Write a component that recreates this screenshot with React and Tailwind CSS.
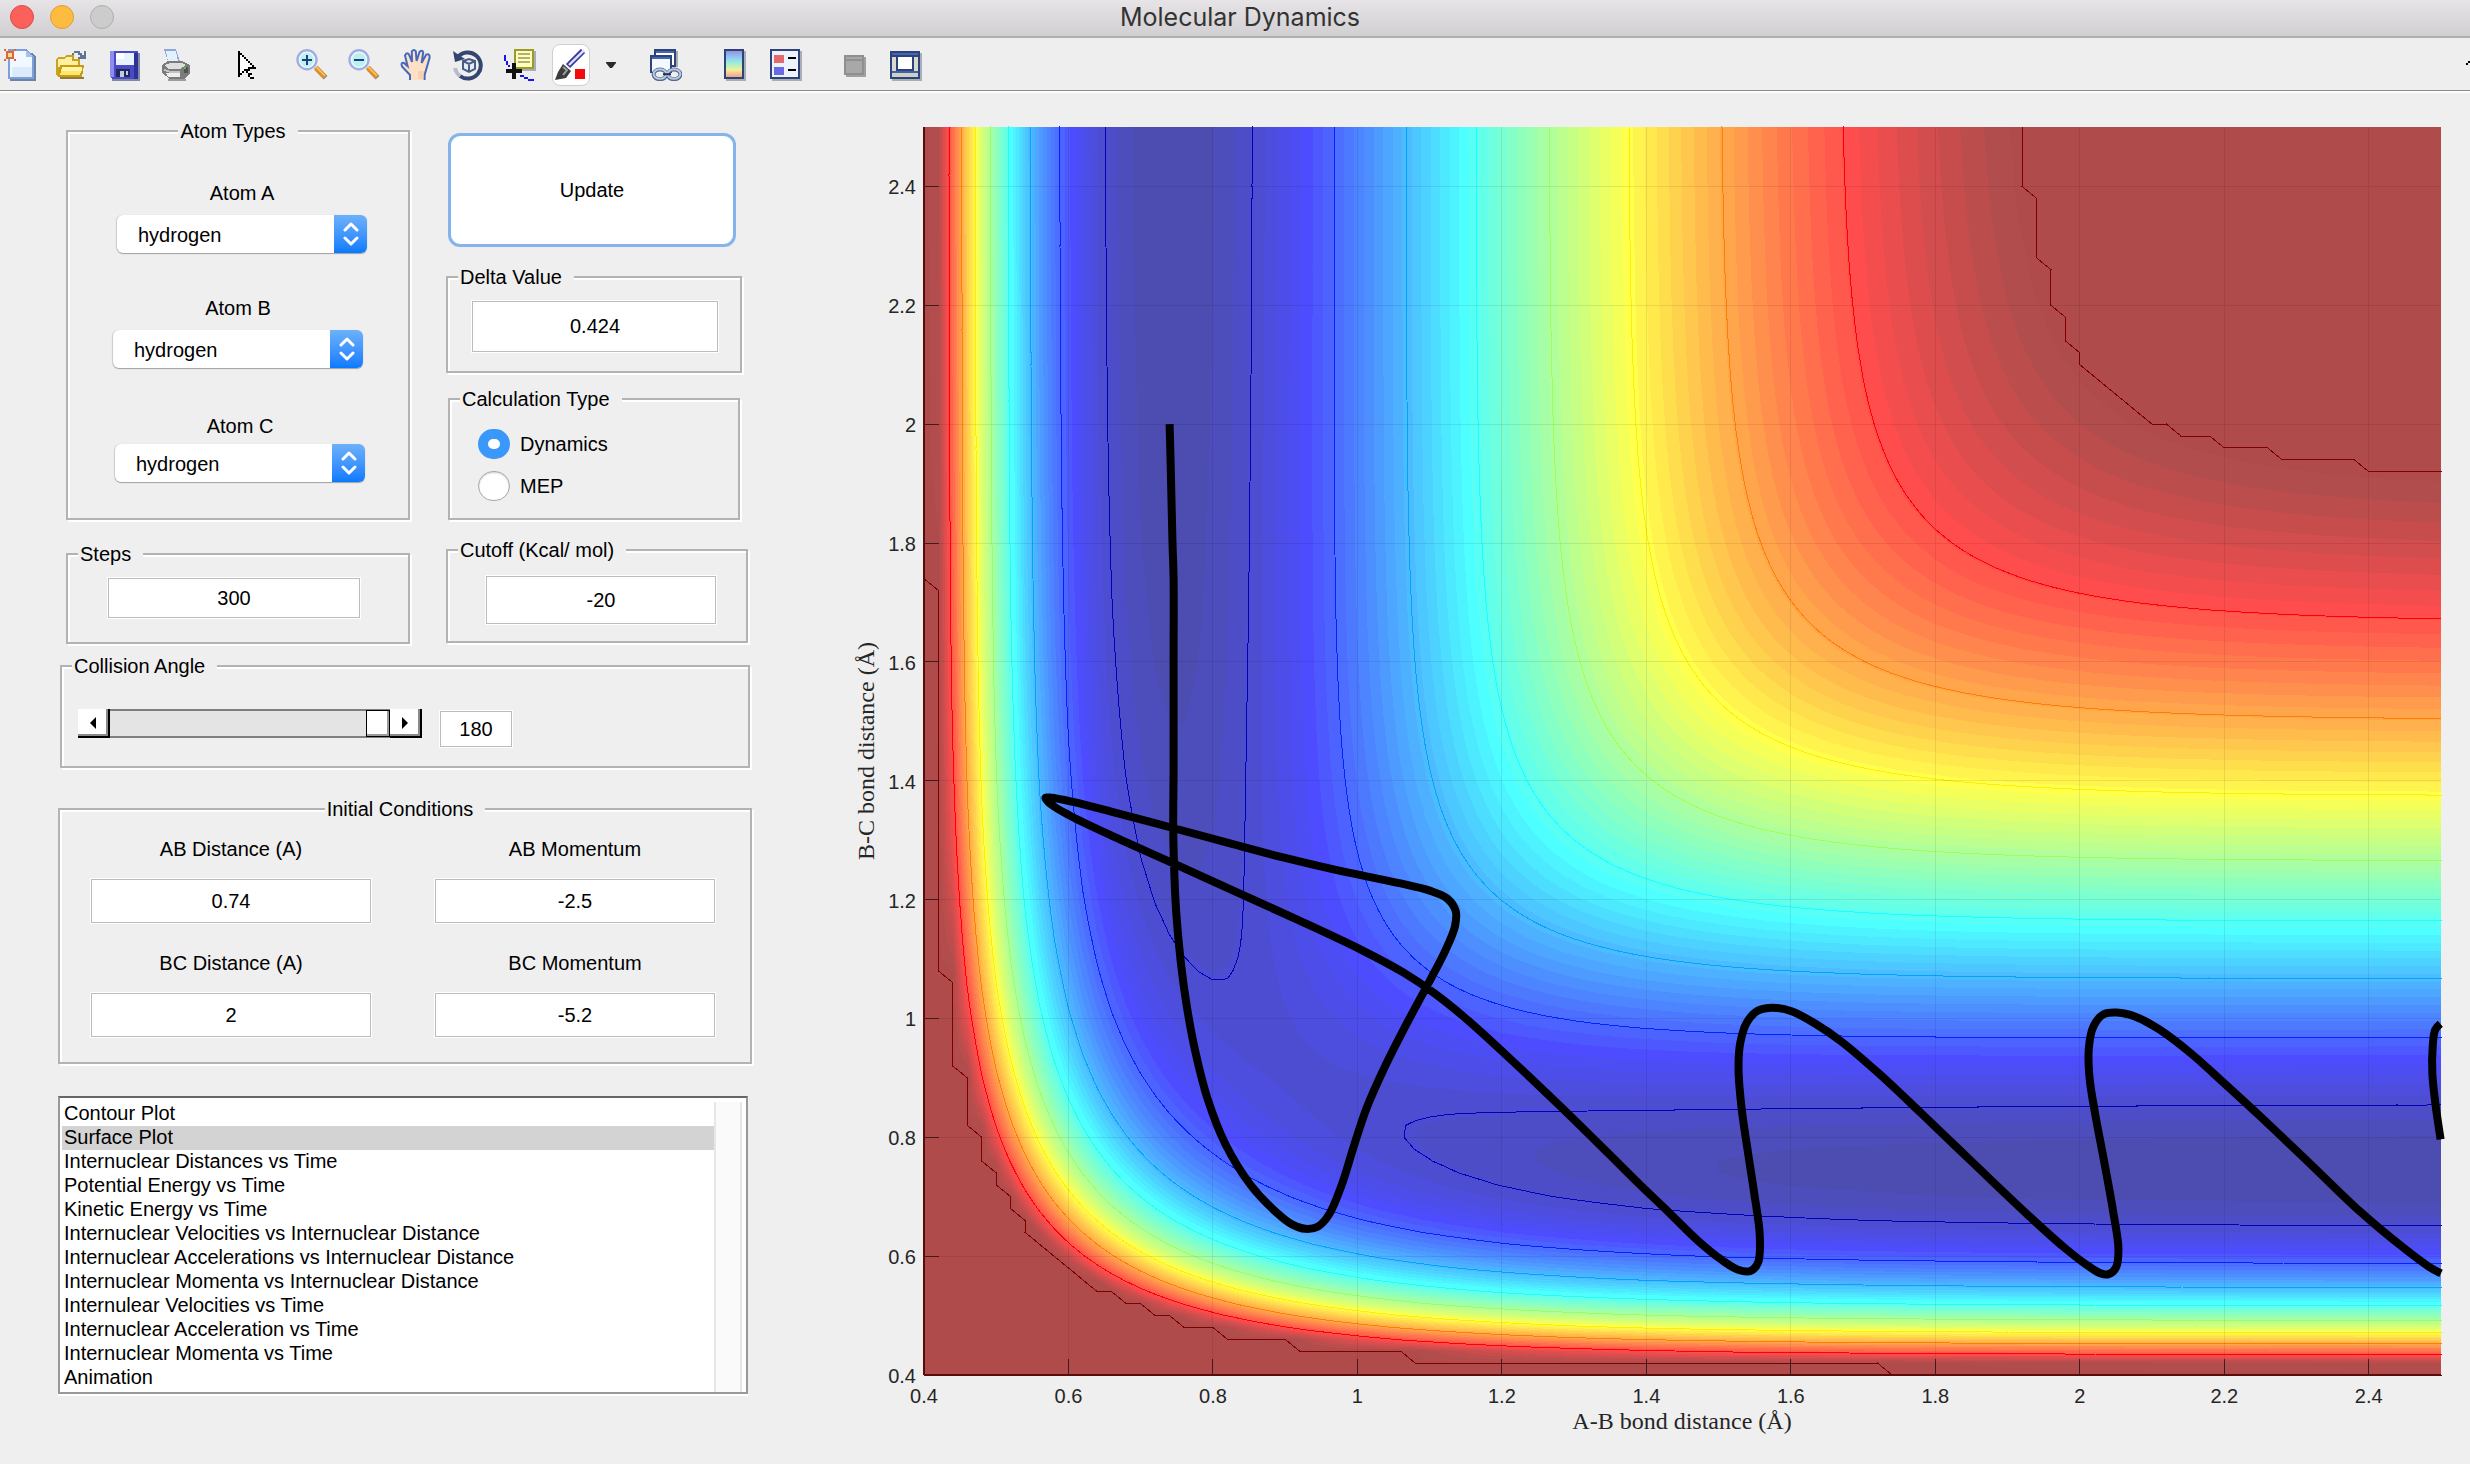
import React, { useState } from "react";

/* ---------- potential energy surface (LEPS, collinear H + H2) ---------- */

const DISSOCIATION = 109.46;
const BOND = 0.7414;
const SATO = 0.18;
const CUTOFF = -21.9;
const FLOOR = -109.4;
const MIN = 0.4;
const STEP = 0.02;
const COUNT = 106;
const PLOT_W = 1517;
const PLOT_H = 1248;

function pair(r) {
  const beta = r < BOND ? 1.975 : 1.942;
  const m = Math.exp(-beta * (r - BOND));
  const bound = DISSOCIATION * (m * m - 2 * m) * (1 + SATO);
  const free = 0.5 * DISSOCIATION * (m * m + 2 * m) * (1 - SATO);
  return [(bound + free) / 2, (bound - free) / 2];
}

function energy(ab, bc) {
  const [q1, j1] = pair(ab);
  const [q2, j2] = pair(bc);
  const [q3, j3] = pair(ab + bc);
  const root = Math.sqrt(0.5 * ((j1 - j2) ** 2 + (j2 - j3) ** 2 + (j1 - j3) ** 2));
  return Math.min(CUTOFF, (q1 + q2 + q3 - root) / (1 + SATO));
}

const toX = (v) => ((v - MIN) / 2.1) * PLOT_W;
const toY = (v) => PLOT_H - ((v - MIN) / 2.1) * PLOT_H;

const N = COUNT + 2;
const clampIndex = (i) => Math.min(COUNT - 1, Math.max(0, i - 1));
const px = Array.from({ length: N }, (_, i) => toX(MIN + clampIndex(i) * STEP));
const py = Array.from({ length: N }, (_, i) => toY(MIN + clampIndex(i) * STEP));
const grid = Array.from({ length: N }, (_, j) =>
  Array.from({ length: N }, (_, i) =>
    i === 0 || j === 0 || i === N - 1 || j === N - 1
      ? 1e7
      : energy(MIN + (i - 1) * STEP, MIN + (j - 1) * STEP)
  )
);

/* Marching squares: closed outlines of the area below a level. */
function trace(level) {
  const next = new Map();
  const points = new Map();
  const lines = [];
  const cross = (i, j, k, l) => {
    const a = grid[j][i];
    const b = grid[l][k];
    const t = (level - a) / (b - a);
    return [px[i] + t * (px[k] - px[i]), py[j] + t * (py[l] - py[j])];
  };
  for (let j = 0; j < N - 1; j++) {
    for (let i = 0; i < N - 1; i++) {
      const corners = [[i, j], [i + 1, j], [i + 1, j + 1], [i, j + 1]];
      const ids = [2 * (j * N + i), 2 * (j * N + i + 1) + 1, 2 * ((j + 1) * N + i), 2 * (j * N + i) + 1];
      const below = corners.map(([a, b]) => grid[b][a] < level);
      const starts = [];
      const ends = [];
      for (let e = 0; e < 4; e++) {
        const f = (e + 1) % 4;
        if (below[e] === below[f]) continue;
        const id = ids[e];
        if (!points.has(id)) points.set(id, cross(...corners[e], ...corners[f]));
        (below[e] ? starts : ends).push([e, id]);
      }
      starts.forEach(([e, id]) => {
        const target = ends.length === 1 ? ends[0] : ends.find(([f]) => f === (e + 3) % 4);
        next.set(id, target[1]);
        if (i > 0 && j > 0 && i < N - 2 && j < N - 2) lines.push([id, target[1]]);
      });
    }
  }
  const text = (id) => {
    const p = points.get(id);
    return p[0].toFixed(1) + " " + p[1].toFixed(1);
  };
  const stroke = lines.map(([a, b]) => "M" + text(a) + "L" + text(b)).join("");
  let fill = "";
  while (next.size) {
    const first = next.keys().next().value;
    let at = first;
    const ring = [];
    while (next.has(at)) {
      ring.push(text(at));
      const to = next.get(at);
      next.delete(at);
      at = to;
    }
    fill += "M" + ring.join("L") + "Z";
  }
  return { fill, stroke };
}

function jet(k, alpha) {
  const ramp = (offset) => {
    const t = (k + 1 - offset) / 16;
    return Math.max(0, Math.min(1, t < 1 ? t : t < 2 ? 1 : 3 - t));
  };
  const mix = (v) => Math.round(255 * (v * alpha + (1 - alpha)));
  return `rgb(${mix(ramp(24))},${mix(ramp(8))},${mix(ramp(-8))})`;
}

const bands = [];
for (let k = 62; k >= 0; k--) {
  const level = FLOOR + ((CUTOFF + 1 - FLOOR) * (k + 1)) / 64;
  if (level < CUTOFF) bands.push({ color: jet(k, 0.7), path: trace(level).fill });
}

const CONTOURS = [
  [-105.1, "#0000b4"],
  [-95.5, "#0024ff"],
  [-85.3, "#00a4ff"],
  [-75.1, "#1cffff"],
  [-64.8, "#9cff60"],
  [-54.6, "#ffee00"],
  [-44.2, "#ff8000"],
  [-33.2, "#ff0000"],
  [CUTOFF - 0.00001, "#800000"],
].map(([level, color]) => ({ color, path: trace(level).stroke }));

/* ---------- trajectory ---------- */

const TRAJECTORY = [
  [0.74, 2], [0.7415, 1.93], [0.744, 1.8], [0.7455, 1.74], [0.7455, 1.6], [0.7455, 1.418], [0.745, 1.322], [0.746, 1.263],
  [0.749, 1.181], [0.755, 1.1], [0.764, 1.019], [0.776, 0.942], [0.793, 0.863], [0.817, 0.789], [0.852, 0.72],
  [0.888, 0.6735], [0.91, 0.653], [0.928, 0.646], [0.945, 0.6496], [0.96, 0.6686], [0.978, 0.719], [0.995, 0.785],
  [1.013, 0.85], [1.038, 0.9187], [1.069, 0.993], [1.1, 1.063], [1.122, 1.115], [1.135, 1.155], [1.136, 1.181],
  [1.124, 1.202], [1.1, 1.215], [1.056, 1.228], [0.97, 1.25], [0.897, 1.271], [0.825, 1.294], [0.746, 1.32],
  [0.659, 1.348], [0.608, 1.364], [0.576, 1.3715], [0.568, 1.3708], [0.576, 1.36], [0.601, 1.342], [0.659, 1.308],
  [0.746, 1.2605], [0.832, 1.213], [0.919, 1.165], [1.006, 1.115], [1.064, 1.077], [1.107, 1.042], [1.15, 1],
  [1.216, 0.927], [1.281, 0.852], [1.346, 0.7745], [1.392, 0.719], [1.4286, 0.6767], [1.4725, 0.6247], [1.505, 0.593],
  [1.527, 0.577], [1.544, 0.575], [1.5546, 0.589], [1.557, 0.634], [1.549, 0.708], [1.5407, 0.774], [1.5315, 0.852],
  [1.5275, 0.918], [1.53, 0.959], [1.539, 0.993], [1.554, 1.013], [1.575, 1.018], [1.601, 1.012], [1.634, 0.991],
  [1.67, 0.961], [1.7216, 0.9076], [1.78, 0.841], [1.853, 0.756], [1.9267, 0.671], [1.978, 0.615], [2.011, 0.584],
  [2.029, 0.571], [2.04, 0.5698], [2.05, 0.5805], [2.0535, 0.6116], [2.046, 0.676], [2.0325, 0.767], [2.021, 0.841],
  [2.0135, 0.9], [2.0125, 0.95], [2.019, 0.987], [2.033, 1.007], [2.051, 1.01], [2.077, 1.003], [2.11, 0.9815],
  [2.154, 0.941], [2.198, 0.893], [2.249, 0.836], [2.315, 0.76], [2.388, 0.675], [2.447, 0.615], [2.4835, 0.582], [2.5, 0.571],
];
const RETURN = [[2.499, 0.991], [2.492, 0.981], [2.4885, 0.952], [2.488, 0.9076], [2.4923, 0.856], [2.4995, 0.7966]];

/* Centripetal Catmull-Rom spline as cubic Béziers. */
function spline(data) {
  const p = data.map(([x, y]) => [toX(x), toY(y)]);
  const root = (a, b) => Math.sqrt(Math.hypot(a[0] - b[0], a[1] - b[1])) || 1;
  let d = `M${p[0][0]} ${p[0][1]}`;
  for (let i = 0; i < p.length - 1; i++) {
    const a = p[i - 1] || p[i];
    const b = p[i];
    const c = p[i + 1];
    const e = p[i + 2] || c;
    const s = root(a, b);
    const t = root(b, c);
    const u = root(c, e);
    const one = [0, 1].map((k) =>
      i === 0 ? b[k] : (s * s * c[k] - t * t * a[k] + (2 * s * s + 3 * s * t + t * t) * b[k]) / (3 * s * (s + t))
    );
    const two = [0, 1].map((k) =>
      i === p.length - 2 ? c[k] : (u * u * b[k] - t * t * e[k] + (2 * u * u + 3 * u * t + t * t) * c[k]) / (3 * u * (u + t))
    );
    d += `C${one[0]} ${one[1]} ${two[0]} ${two[1]} ${c[0]} ${c[1]}`;
  }
  return d;
}

const TICKS = [0.4, 0.6, 0.8, 1, 1.2, 1.4, 1.6, 1.8, 2, 2.2, 2.4];

function EnergyPlot() {
  return (
    <svg viewBox="0 0 1620 1371" className="block h-auto w-full" role="img" aria-label="Potential energy contour plot">
      <g transform="translate(74 34)">
        <rect width={PLOT_W} height={PLOT_H} fill="#af4b4b" />
        <g shapeRendering="crispEdges">
          {bands.map((b, i) => (
            <path key={i} d={b.path} fill={b.color} fillRule="evenodd" />
          ))}
          {CONTOURS.map((c, i) => (
            <path key={i} d={c.path} fill="none" stroke={c.color} strokeWidth="1" strokeLinecap="square" />
          ))}
          {TICKS.map((t) => (
            <g key={t} stroke="#000">
              {t > 0.4 && (
                <>
                  <path d={`M${toX(t)} 0V${PLOT_H}M0 ${toY(t)}H${PLOT_W}`} opacity="0.08" />
                  <path d={`M${toX(t)} ${PLOT_H}v-16M0 ${toY(t)}h15`} opacity="0.6" />
                </>
              )}
            </g>
          ))}
          <path d={`M0 0V${PLOT_H}`} stroke="#5a0c0c" strokeWidth="2" fill="none" />
          <path d={`M0 ${PLOT_H}H${PLOT_W}`} stroke="#5a0c0c" strokeWidth="2" />
        </g>
        <path d={spline(TRAJECTORY)} fill="none" stroke="#000" strokeWidth="8" strokeLinejoin="round" />
        <path d={spline(RETURN)} fill="none" stroke="#000" strokeWidth="8" strokeLinejoin="round" />
      </g>
      <g fill="#262626" fontSize="20" className="font-['Liberation_Sans',sans-serif]">
        {TICKS.map((t) => (
          <React.Fragment key={t}>
            <text x={74 + toX(t)} y="1310" textAnchor="middle">{t}</text>
            <text x="66" y={34 + toY(t) + 8} textAnchor="end">{t}</text>
          </React.Fragment>
        ))}
      </g>
      <g fill="#262626" fontSize="24" textAnchor="middle" className="font-['Liberation_Serif',serif]">
        <text x="832" y="1336">A-B bond distance (Å)</text>
        <text transform="translate(24 658) rotate(-90)">B-C bond distance (Å)</text>
      </g>
    </svg>
  );
}

/* ---------- toolbar ---------- */

function Icon({ children, wide }) {
  return (
    <svg viewBox={wide || "0 0 16 16"} className="block size-8" shapeRendering="crispEdges" aria-hidden="true">
      {children}
    </svg>
  );
}

function Magnifier({ plus }) {
  return (
    <Icon>
      <g shapeRendering="auto">
        <path d="M10.2 9.6l4.6 4.8" stroke="#8d8d94" strokeWidth="2.6" />
        <path d="M9.8 9.2l4.6 4.8" stroke="#e08f22" strokeWidth="2.4" />
        <path d="M10 8.8l4.4 4.6" stroke="#ffc36a" strokeWidth="0.8" />
        <circle cx="5.5" cy="5.4" r="4.7" fill="#bdeef0" stroke="#a3aee0" strokeWidth="1.3" />
        <circle cx="5.5" cy="5.4" r="3.8" fill="none" stroke="#e8fbff" strokeWidth="0.7" />
      </g>
      <path d="M3 5h5v1H3z" fill="#1c3f80" />
      {plus && <path d="M5 3h1v5H5z" fill="#1c3f80" />}
    </Icon>
  );
}

const TOOLS = [
  {
    label: "New figure", gap: "ml-1",
    art: (
      <Icon>
        <path d="M3 2h11l2 2v12H3z" fill="#6d83a3" />
        <path d="M2 0h9l4 4v11H2z" fill="#7ba0dc" />
        <path d="M3 1h8v3h3v10H3z" fill="#f2f8ff" />
        <path d="M4 9h10v5H4z" fill="#dcebfb" />
        <path d="M11 1h1v1h1v1h1v1h-3z" fill="#a9c2ea" />
        <path d="M1 1h4v4H1zM0 0h1v1H0zM5 0h1v1H5zM0 5h1v1H0zM5 5h1v1H5z" fill="#e0653a" />
        <path d="M2 2h2v2H2z" fill="#ffe08a" />
      </Icon>
    ),
  },
  {
    label: "Open", gap: "ml-5",
    art: (
      <Icon>
        <path d="M0 5l1-1h3l1-1h4v2h3v9H1l-1-1z" fill="#caa21c" />
        <path d="M1 5h3l1-1h3v2h3v3H1z" fill="#fff0a0" />
        <path d="M2 8h12l-1 6H1z" fill="#c99a14" />
        <path d="M3 9h10l-1 4H2z" fill="#ffe668" />
        <path d="M3 9h10v2H3z" fill="#fff6a8" />
        <path d="M8 2h1V1h3v1h1v1h1V1h1v4h-4V4h1V3h-1V2H9v1H8z" fill="#5c7693" />
        <path d="M2 14h12v1H2z" fill="#8f7a3c" />
      </Icon>
    ),
  },
  {
    label: "Save", gap: "ml-5",
    art: (
      <Icon>
        <path d="M2 2h14v14H2z" fill="#7f8aa6" />
        <path d="M1 1h14v14H2l-1-1z" fill="#4a4ac4" />
        <path d="M1 1h2v13H1z" fill="#8d8df0" />
        <path d="M13 2h2v13h-2z" fill="#30309a" />
        <path d="M4 2h9v6H4z" fill="#e9f3ff" />
        <path d="M4 2h4v3H4z" fill="#fff" />
        <path d="M4 10h7v4H4z" fill="#26265e" />
        <path d="M6 11h2v3H6zM9 11h1v2H9z" fill="#b9d0d8" />
      </Icon>
    ),
  },
  {
    label: "Print", gap: "ml-5",
    art: (
      <Icon>
        <path d="M2 0h6l2 6H4z" fill="#8fa9d4" />
        <path d="M3 1h5l1 5H4z" fill="#e2f0ff" />
        <path d="M1 8l3-2h7l4 2v4l-3 3H5l-4-3z" fill="#7b7b7b" />
        <path d="M2 8l3-1h6l2 1-3 2H4z" fill="#dedede" />
        <path d="M2 10l3 1h5v1H5l-3-1z" fill="#c4c4c4" />
        <path d="M3 12h7v2H4z" fill="#eee" />
        <path d="M12 9h2v3h-2z" fill="#545454" />
        <path d="M12 9h1v1h-1z" fill="#5fc03e" />
        <path d="M4 15h9v1H4z" fill="#9c9c9c" />
      </Icon>
    ),
  },
  {
    label: "Edit plot", gap: "ml-11",
    art: (
      <Icon>
        <path d="M1 1h1v1h1v1h1v1h1v1h1v1h1v1h1v1h1v1h1v1H7v2h1v2h1v1H7v-1H6v-2H5v-1H4v1H3v1H2v1H1z" fill="#000" />
        <path d="M2 3h1v1h1v1h1v1h1v1h1v1h1v1H6v2h1v2h1v1H7v-2H6v-2H4v1H3v1H2z" fill="#fff" />
      </Icon>
    ),
  },
  { label: "Zoom in", gap: "ml-7", art: <Magnifier plus /> },
  { label: "Zoom out", gap: "ml-5", art: <Magnifier /> },
  {
    label: "Pan", gap: "ml-5",
    art: (
      <Icon>
        <path
          shapeRendering="auto"
          d="M5 15.5V13L1 8.7Q.2 6.6 2 7l1.8 1.6L2.5 3.2Q3.6 1.2 4.6 3L6 6.5 5.9 1.2Q7-.2 7.9 1.2L8.3 6 9.8 1.4Q11.2.2 11.6 1.8L10.8 7l2.3-4.2Q15 2.2 14.8 4.4L12.3 13v2.5"
          fill="#fde0c6" stroke="#4668bd" strokeWidth="1"
        />
        <path d="M9 11h3v4H9z" fill="#eec09c" opacity=".5" />
      </Icon>
    ),
  },
  {
    label: "Rotate 3D", gap: "ml-5",
    art: (
      <Icon wide="0 0 32 32">
        <g shapeRendering="auto" fill="none">
          <path d="M6 8A13 13 0 1 1 8 27" stroke="#34466f" strokeWidth="4" />
          <path d="M8 27A13 13 0 0 1 3 19" stroke="#b7bcc8" strokeWidth="4" />
          <path d="M1 2l2 11 10-3z" fill="#34466f" />
          <path d="M11 12l6-2 6 2v8l-6 3-6-3zM11 12l6 3 6-3M17 15v8" stroke="#4a5b85" strokeWidth="2" fill="#e6ecf4" />
        </g>
      </Icon>
    ),
  },
  {
    label: "Data cursor", gap: "ml-5",
    art: (
      <Icon>
        <path d="M0 3h1v3H0zM1 6h1v2H1zM2 8h1v1H2zM8 13h2v1H8zM10 14h2v1h-2zM12 15h3v1h-3z" fill="#1414f0" />
        <path d="M6 1h10v10H6z" fill="#a9adb8" />
        <path d="M5 0h10v10H5z" fill="#9a9a2e" />
        <path d="M6 1h8v8H6z" fill="#ffffb8" />
        <path d="M7 2h6v1H7zM7 4h6v1H7zM7 6h6v1H7z" fill="#b0b078" />
        <path d="M4 7h2v8H4zM1 10h8v2H1z" fill="#111" />
      </Icon>
    ),
  },
];

function Toolbar() {
  return (
    <div role="toolbar" aria-label="Figure tools" className="flex h-[55px] items-center border-b-2 border-white bg-[#eeeeee] shadow-[inset_0_-1px_0_#8c8c8c]">
      {TOOLS.map((t) => (
        <button key={t.label} type="button" aria-label={t.label} className={t.gap}>
          {t.art}
        </button>
      ))}
      <button type="button" aria-label="Brush" className="ml-4 flex h-[42px] w-[38px] items-center justify-center rounded-lg border border-[#cfcfcf] bg-white">
        <Icon>
          <g shapeRendering="auto">
            <path d="M6.5 8.5L14 1" stroke="#3b3b9c" strokeWidth="3" />
            <path d="M7 8L14.6.6" stroke="#dfe2ff" strokeWidth="1.2" />
            <path d="M4 7.5L8 11l-2.5 3.5L0 15.5l1.5-4z" fill="#3c3c3c" />
            <path d="M4 9l2 1.6-2 2.4" fill="none" stroke="#9a9a9a" />
          </g>
          <path d="M10 10h5v5h-5z" fill="#f40b0b" />
        </Icon>
      </button>
      <button type="button" aria-label="Brush options" className="ml-4">
        <svg viewBox="0 0 10 6" className="block h-1.5 w-2.5" aria-hidden="true"><path d="M0 0h10v1L6 6H4L0 1z" fill="#2b2b2b" /></svg>
      </button>
      <button type="button" aria-label="Link plot" className="ml-[34px]">
        <Icon>
          <path d="M5 1h9v8H5z" fill="#a6abb5" />
          <path d="M2 0h11v9H2z" fill="#2c4479" />
          <path d="M3 2h9v6H3z" fill="#fff" /><path d="M3 1h9v1H3z" fill="#4765b4" />
          <path d="M0 3h11v9H0z" fill="#2c4479" />
          <path d="M1 5h9v7H1z" fill="#f4f8ff" /><path d="M1 4h9v1H1z" fill="#4765b4" />
          <g shapeRendering="auto" fill="none">
            <ellipse cx="5" cy="12.7" rx="3.2" ry="2.4" stroke="#54678c" strokeWidth="2" />
            <ellipse cx="12" cy="12.7" rx="3.2" ry="2.4" stroke="#54678c" strokeWidth="2" />
            <ellipse cx="5" cy="12.5" rx="3.2" ry="2.4" stroke="#b9cbe4" strokeWidth="1" />
            <ellipse cx="12" cy="12.5" rx="3.2" ry="2.4" stroke="#b9cbe4" strokeWidth="1" />
            <path d="M6.5 12.6h4" stroke="#1d2f52" strokeWidth="1" />
          </g>
        </Icon>
      </button>
      <button type="button" aria-label="Insert colorbar" className="ml-9">
        <Icon>
          <defs>
            <linearGradient id="bar" x1="0" y1="0" x2="0" y2="1">
              <stop offset="0" stopColor="#9a8fe6" /><stop offset=".3" stopColor="#8ed6f4" /><stop offset=".5" stopColor="#a4f0cc" />
              <stop offset=".72" stopColor="#f2ef9a" /><stop offset="1" stopColor="#f4a08c" />
            </linearGradient>
          </defs>
          <path d="M4 1h10v15H4z" fill="#a9adb5" />
          <path d="M3 0h10v15H3z" fill="#2c4479" />
          <path d="M4 1h8v13H4z" fill="url(#bar)" />
        </Icon>
      </button>
      <button type="button" aria-label="Insert legend" className="ml-5">
        <Icon>
          <path d="M1 1h15v15H1z" fill="#a9adb5" />
          <path d="M0 0h15v15H0z" fill="#2c4479" />
          <path d="M1 1h13v13H1z" fill="#edf3fc" />
          <path d="M2 3h5v4H2z" fill="#e66a6a" />
          <path d="M2 9h5v4H2z" fill="#6a6ae6" />
          <path d="M9 4h4v1H9zM9 10h4v1H9z" fill="#000" />
        </Icon>
      </button>
      <button type="button" aria-label="Hide plot tools" disabled className="ml-10">
        <Icon>
          <path d="M2 4h10v10H2z" fill="#a0a0a0" />
          <path d="M1 3h10v10H1z" fill="#8f8f8f" />
          <path d="M2 4h8v1H2zM2 6h8v6H2z" fill="#a8a8a8" />
        </Icon>
      </button>
      <button type="button" aria-label="Show plot tools" className="ml-4">
        <Icon>
          <path d="M1 2h15v14H1z" fill="#a9adb5" />
          <path d="M0 1h15v14H0z" fill="#2c4479" />
          <path d="M1 2h13v1H1z" fill="#4765b4" />
          <path d="M1 4h13v7H1z" fill="#d9d9d2" />
          <path d="M3 4h9v7H3z" fill="#2c4479" />
          <path d="M4 4h7v6H4z" fill="#fff" />
          <path d="M1 12h13v2H1z" fill="#cfcfc6" />
          <path d="M1 11h13v1H1z" fill="#3f62a8" />
        </Icon>
      </button>
      <svg viewBox="0 0 4 4" className="-mt-1 ml-auto size-1" aria-hidden="true"><path d="M0 2h2V0h2v2H2v2H0z" /></svg>
    </div>
  );
}

/* ---------- controls ---------- */

function Group({ title, className, centered, children }) {
  return (
    <fieldset className={`min-w-0 border-2 border-[#b3b3b3] p-0 shadow-[inset_2px_2px_0_#fff,2px_2px_0_#fff] ${className}`}>
      <legend className={`bg-[#efefef] pr-3 pl-0.5 leading-7 ${centered ? "mx-auto" : "ml-2.5"}`}>{title}</legend>
      {children}
    </fieldset>
  );
}

function Field({ label, value, className, id }) {
  return (
    <input
      id={id}
      aria-label={label}
      defaultValue={value}
      className={`block border border-[#bcbcbc] bg-white p-0 text-center outline-1 outline-white ${className}`}
    />
  );
}

function AtomSelect({ name, className }) {
  const id = "atom-" + name;
  return (
    <div className={`flex flex-col items-center ${className}`}>
      <label htmlFor={id} className="leading-7">Atom {name}</label>
      <div className="relative w-[250px]">
        <select id={id} className="block h-[38px] w-full appearance-none rounded-md bg-white pt-0.5 pr-9 pl-[21px] shadow-[0_1px_1px_#a0a0a0,-1px_0_1px_#d0d0d0]">
          <option>hydrogen</option>
        </select>
        <span className="pointer-events-none absolute top-0 right-0 flex h-[38px] w-[33px] items-center justify-center rounded-r-md bg-linear-to-b from-[#6cb1fa] to-[#067aff]">
          <svg viewBox="0 0 16 26" className="h-[26px] w-4" fill="none" stroke="#fff" strokeWidth="3" strokeLinecap="round" strokeLinejoin="round" aria-hidden="true">
            <path d="M2 9l6-6 6 6M2 17l6 6 6-6" />
          </svg>
        </span>
      </div>
    </div>
  );
}

function Radio({ label, checked, onChange }) {
  return (
    <label className="mb-3 flex items-center gap-2.5 leading-[30px]">
      <input
        type="radio"
        name="calculation"
        checked={checked}
        onChange={onChange}
        className="h-[30px] w-8 appearance-none rounded-full border border-[#a8a8a8] bg-white shadow-[inset_0_1px_2px_#ccc] checked:border-[10px] checked:border-[#3a97fb] checked:shadow-none"
      />
      {label}
    </label>
  );
}

function Condition({ id, label, value }) {
  return (
    <div className="flex flex-col items-center">
      <label htmlFor={id} className="leading-7">{label}</label>
      <Field id={id} label={label} value={value} className="mt-4 h-[44px] w-[280px]" />
    </div>
  );
}

const PLOTS = [
  "Contour Plot",
  "Surface Plot",
  "Internuclear Distances vs Time",
  "Potential Energy vs Time",
  "Kinetic Energy vs Time",
  "Internuclear Velocities vs Internuclear Distance",
  "Internuclear Accelerations vs Internuclear Distance",
  "Internuclear Momenta vs Internuclear Distance",
  "Internulear Velocities vs Time",
  "Internuclear Acceleration vs Time",
  "Internuclear Momenta vs Time",
  "Animation",
];

const STEP_BUTTON = "flex h-[29px] w-8 items-center justify-center border-r-2 border-b-2 border-black bg-white shadow-[inset_-2px_-2px_0_#8a8a8a]";

function Controls() {
  const [mode, setMode] = useState("Dynamics");
  const [angle, setAngle] = useState(180);
  const [plot, setPlot] = useState("Surface Plot");
  return (
    <aside className="w-[850px] shrink-0 pt-6 pl-[58px]">
      <div className="flex gap-9 pl-2">
        <div className="w-[344px]">
          <Group title="Atom Types" centered className="h-[403px]">
            <AtomSelect name="A" className="mt-[34px] gap-2 pl-2" />
            <AtomSelect name="B" className="mt-[41px] gap-2" />
            <AtomSelect name="C" className="mt-11 gap-1 pl-1" />
          </Group>
          <Group title="Steps" className="mt-5 h-[104px]">
            <Field label="Steps" value="300" className="mt-2.5 ml-10 h-10 w-[252px]" />
          </Group>
        </div>
        <div className="w-[302px]">
          <button type="button" className="mt-4 ml-0.5 block h-[114px] w-[288px] rounded-xl border-3 border-[#83b5ea] bg-white">Update</button>
          <Group title="Delta Value" className="mt-4 h-[110px] w-[296px]">
            <Field label="Delta Value" value="0.424" className="mt-2.5 ml-6 h-[51px] w-[246px]" />
          </Group>
          <Group title="Calculation Type" className="mt-3 ml-0.5 h-[135px] w-[292px]">
            <div className="mt-4 ml-7">
              <Radio label="Dynamics" checked={mode === "Dynamics"} onChange={() => setMode("Dynamics")} />
              <Radio label="MEP" checked={mode === "MEP"} onChange={() => setMode("MEP")} />
            </div>
          </Group>
          <Group title="Cutoff (Kcal/ mol)" className="mt-4 h-[107px]">
            <Field label="Cutoff" value="-20" className="mt-3 ml-[38px] h-12 w-[230px]" />
          </Group>
        </div>
      </div>
      <Group title="Collision Angle" className="mt-2 ml-0.5 h-[116px] w-[690px]">
        <div className="mt-[29px] ml-4 flex">
          <button type="button" aria-label="Decrease angle" className={STEP_BUTTON}>
            <svg viewBox="0 0 6 12" className="h-3 w-1.5" aria-hidden="true"><path d="M6 0v12L0 6z" /></svg>
          </button>
          <input
            type="range" aria-label="Collision Angle" min="0" max="180" value={angle}
            onChange={(e) => setAngle(Number(e.target.value))}
            className="h-[29px] w-[280px] appearance-none border-y-2 border-[#7f7f7f] bg-[#e4e4e4] [&::-webkit-slider-thumb]:h-[27px] [&::-webkit-slider-thumb]:w-6 [&::-webkit-slider-thumb]:appearance-none [&::-webkit-slider-thumb]:border [&::-webkit-slider-thumb]:border-black [&::-webkit-slider-thumb]:bg-white [&::-webkit-slider-thumb]:shadow-[inset_-2px_-2px_0_#9a9a9a]"
          />
          <button type="button" aria-label="Increase angle" className={STEP_BUTTON}>
            <svg viewBox="0 0 6 12" className="h-3 w-1.5" aria-hidden="true"><path d="M0 0v12l6-6z" /></svg>
          </button>
          <input aria-label="Angle in degrees" value={angle} onChange={(e) => setAngle(Number(e.target.value) || 0)} className="mt-0.5 ml-[18px] h-9 w-[72px] border border-[#bcbcbc] bg-white text-center outline-1 outline-white" />
        </div>
      </Group>
      <Group title="Initial Conditions" centered className="mt-[27px] h-[269px] w-[694px]">
        <div className="mt-3 flex gap-16 pl-[31px]">
          <div className="flex flex-col gap-[26px]">
            <Condition id="ab-distance" label="AB Distance (A)" value="0.74" />
            <Condition id="bc-distance" label="BC Distance (A)" value="2" />
          </div>
          <div className="flex flex-col gap-[26px]">
            <Condition id="ab-momentum" label="AB Momentum" value="-2.5" />
            <Condition id="bc-momentum" label="BC Momentum" value="-5.2" />
          </div>
        </div>
      </Group>
      <div className="mt-8 flex w-[690px] border-2 border-[#999] border-t-[#666] bg-white shadow-[0_2px_0_#fff]">
        <select
          size={12} aria-label="Plot" value={plot} onChange={(e) => setPlot(e.target.value)}
          className="h-[294px] grow overflow-hidden bg-white p-0 pt-1 pl-0.5 outline-none"
        >
          {PLOTS.map((p) => (
            <option key={p} className="h-6 p-0 pl-0.5 leading-6 text-black checked:bg-[linear-gradient(#d3d3d3,#d3d3d3)]">{p}</option>
          ))}
        </select>
        <div className="mt-1 mr-1 w-7 border-x-2 border-[#e6e6e6] bg-[#fafafa]" />
      </div>
    </aside>
  );
}

export default function App() {
  return (
    <div className="min-h-screen overflow-hidden bg-[#efefef] font-['Liberation_Sans',sans-serif] text-[20px] text-black">
      <header className="relative flex h-[38px] items-center justify-center border-b-2 border-[#b1afb1] bg-linear-to-b from-[#e6e4e6] to-[#d1cfd1] pb-0.5 pl-2.5">
        <div className="absolute left-2.5 flex gap-4">
          <button type="button" aria-label="Close" className="size-6 rounded-full border border-[#de4a44] bg-[#fc605b]" />
          <button type="button" aria-label="Minimize" className="size-6 rounded-full border border-[#de9f33] bg-[#fdbc40]" />
          <button type="button" aria-label="Zoom" className="size-6 rounded-full border border-[#b0aeb0] bg-[#cdcccd]" />
        </div>
        <h1 className="font-['Inter',sans-serif] text-[25px] leading-8 text-[#333]">Molecular Dynamics</h1>
      </header>
      <Toolbar />
      <main className="flex items-start">
        <Controls />
        <div className="min-w-0 grow">
          <EnergyPlot />
        </div>
      </main>
    </div>
  );
}
